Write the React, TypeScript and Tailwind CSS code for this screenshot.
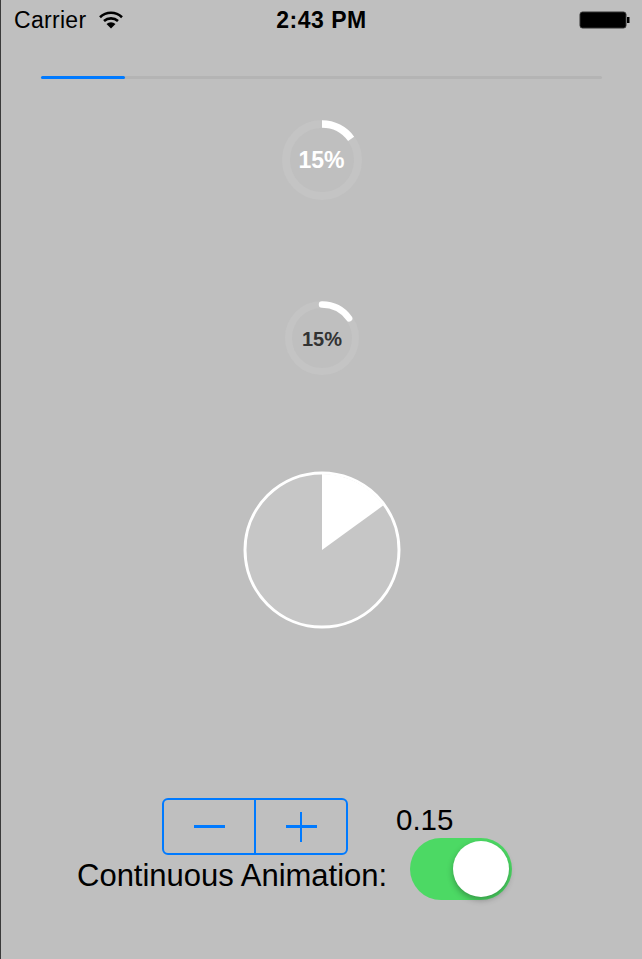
import React from "react";

const font = { fontFamily: '"Liberation Sans", Arial, sans-serif' };

function Wifi() {
  return (
    <svg width="24" height="18" viewBox="0 0 24 18">
      <path d="M1 6.2 A16 16 0 0 1 23 6.2" fill="none" stroke="#000" strokeWidth="2.6" />
      <path d="M5 10 A10.5 10.5 0 0 1 19 10" fill="none" stroke="#000" strokeWidth="2.6" />
      <path d="M12 17.5 L7.5 13 A6.5 6.5 0 0 1 16.5 13 Z" fill="#000" />
    </svg>
  );
}

function Battery() {
  return (
    <svg width="52" height="20" viewBox="0 0 52 20">
      <rect x="1" y="2" width="46" height="16" rx="2.5" fill="#000" stroke="#333" strokeWidth="1" />
      <rect x="48" y="7" width="2.5" height="6" fill="#000" />
    </svg>
  );
}

function Ring1() {
  const r = 36;
  const c = 40;
  const a = (54 * Math.PI) / 180;
  const ex = c + r * Math.sin(a);
  const ey = c - r * Math.cos(a);
  return (
    <div className="relative w-[80px] h-[80px]">
      <svg width="80" height="80" viewBox="0 0 80 80" className="absolute inset-0">
        <circle cx={c} cy={c} r={r} fill="none" stroke="#c4c4c4" strokeWidth="8" />
        <path d={`M${c} ${c - r} A${r} ${r} 0 0 1 ${ex} ${ey}`} fill="none" stroke="#fff" strokeWidth="7.5" />
      </svg>
      <div className="absolute inset-0 flex items-center justify-center text-white text-[23px] font-bold" style={font}>
        15%
      </div>
    </div>
  );
}

function Ring2() {
  const r = 33.5;
  const c = 37;
  const a = (54 * Math.PI) / 180;
  const ex = c + r * Math.sin(a);
  const ey = c - r * Math.cos(a);
  return (
    <div className="relative w-[74px] h-[74px]">
      <svg width="74" height="74" viewBox="0 0 74 74" className="absolute inset-0">
        <circle cx={c} cy={c} r={r} fill="none" stroke="#c4c4c4" strokeWidth="7" />
        <path d={`M${c} ${c - r} A${r} ${r} 0 0 1 ${ex} ${ey}`} fill="none" stroke="#fff" strokeWidth="6.5" strokeLinecap="round" />
      </svg>
      <div className="absolute inset-0 flex items-center justify-center text-[#333] text-[20px] font-bold pt-[1px]" style={font}>
        15%
      </div>
    </div>
  );
}

function Pie() {
  const c = 79;
  const r = 77;
  const a = (54 * Math.PI) / 180;
  const ex = c + (r - 1) * Math.sin(a);
  const ey = c - (r - 1) * Math.cos(a);
  return (
    <svg width="158" height="158" viewBox="0 0 158 158">
      <circle cx={c} cy={c} r={r} fill="#c6c6c6" stroke="#fff" strokeWidth="3" />
      <path d={`M${c} ${c} L${c} ${c - r + 1} A${r - 1} ${r - 1} 0 0 1 ${ex} ${ey} Z`} fill="#fff" />
    </svg>
  );
}

export default function App() {
  return (
    <div className="w-[642px] h-[959px] bg-[#bfbfbf] border-l border-[#3a3a3a] flex flex-col overflow-hidden" style={font}>
      {/* status bar */}
      <div className="h-[40px] flex items-center justify-between pl-[13px] pr-[11px] relative">
        <div className="flex items-center gap-[13px]">
          <span className="text-[23px] tracking-[0.3px] text-black leading-none">Carrier</span>
          <Wifi />
        </div>
        <span className="absolute left-0 right-0 text-center text-[23px] tracking-[0.5px] font-bold text-black leading-none">2:43 PM</span>
        <Battery />
      </div>

      {/* progress */}
      <div className="mt-[36px] mx-[40px] h-[3px] rounded-full bg-[#b4b4b4] flex">
        <div className="h-full w-[84px] bg-[#007aff] rounded-full" />
      </div>

      <div className="mt-[41px] flex justify-center">
        <Ring1 />
      </div>
      <div className="mt-[101px] flex justify-center pl-[1px]">
        <Ring2 />
      </div>
      <div className="mt-[96px] flex justify-center pl-[1px]">
        <Pie />
      </div>

      {/* controls */}
      <div className="mt-[169px] flex pl-[76px]">
        <div className="flex flex-col w-[313px]">
          <div className="ml-[85px] w-[186px] h-[57px] border-2 border-[#007aff] rounded-[6px] flex">
            <div className="flex-1 flex items-center justify-center border-r-2 border-[#007aff]">
              <div className="w-[31px] h-[2.5px] bg-[#007aff]" />
            </div>
            <div className="flex-1 flex items-center justify-center relative">
              <div className="w-[31px] h-[2.5px] bg-[#007aff]" />
              <div className="absolute w-[2.5px] h-[30px] bg-[#007aff]" />
            </div>
          </div>
          <span className="mt-[4px] text-[31px] leading-[34px] text-black whitespace-nowrap">Continuous Animation:</span>
        </div>
        <div className="flex flex-col ml-[6px]">
          <span className="mt-[7px] text-[29.5px] leading-[30px] text-black">0.15</span>
          <div className="mt-[3px] ml-[14px] w-[102px] h-[62px] rounded-full bg-[#4cd964] relative">
            <div className="absolute right-[3px] top-[3px] w-[56px] h-[56px] rounded-full bg-white shadow-[0_3px_6px_rgba(0,0,0,0.3)]" />
          </div>
        </div>
      </div>
    </div>
  );
}
